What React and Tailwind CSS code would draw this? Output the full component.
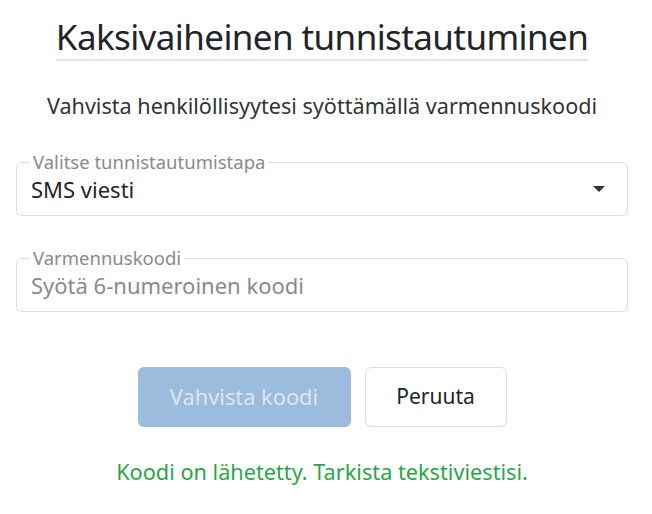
export default function App() {
  return (
    <div className="min-h-[514px] bg-white font-['Noto_Sans',sans-serif] text-[#212529]">
      <div className="ml-4 w-[612px] pt-[15px]">
        <div className="text-center">
          <h1 className="inline-block border-b-2 border-[#e6e6ee] text-[35px] leading-[44px] font-normal tracking-[-0.6px]">
            Kaksivaiheinen tunnistautuminen
          </h1>
        </div>

        <p className="mt-[31px] text-center text-[21.6px] leading-[28px] text-[#333]">
          Vahvista henkilöllisyytesi syöttämällä varmennuskoodi
        </p>

        <fieldset className="mt-[31px] rounded-md border border-[#dcdcdc] px-[14px] pb-[13px]">
          <legend className="ml-[-1px] px-[3px] text-[18.5px] leading-[22px] text-[#8a8a8a]">
            Valitse tunnistautumistapa
          </legend>
          <div className="mt-[3px] flex items-center justify-between">
            <span className="text-[22px] leading-[26px]">SMS viesti</span>
            <svg width="12" height="6" viewBox="0 0 12 6" className="mr-[8px]">
              <path d="M0 0h12L6 6z" fill="#333" />
            </svg>
          </div>
        </fieldset>

        <fieldset className="mt-[31px] rounded-md border border-[#dcdcdc] px-[14px] pb-[13px]">
          <legend className="ml-[-1px] px-[3px] text-[18.5px] leading-[22px] text-[#8a8a8a]">
            Varmennuskoodi
          </legend>
          <div className="mt-[3px] text-[22px] leading-[26px] text-[#8a8a8a]">
            Syötä 6-numeroinen koodi
          </div>
        </fieldset>

        <div className="mt-[55px] flex justify-center gap-[14px]">
          <button className="h-[60px] w-[213px] rounded-md bg-[#9bbcdc] text-[21.8px] text-[#dce7f3]">
            Vahvista koodi
          </button>
          <button className="h-[60px] w-[142px] rounded-md border border-[#dcdcdc] bg-white text-[21px] text-[#212529]">
            Peruuta
          </button>
        </div>

        <p className="mt-[31px] text-center text-[21.7px] leading-[28px] text-[#28a745]">
          Koodi on lähetetty. Tarkista tekstiviestisi.
        </p>
      </div>
    </div>
  );
}
